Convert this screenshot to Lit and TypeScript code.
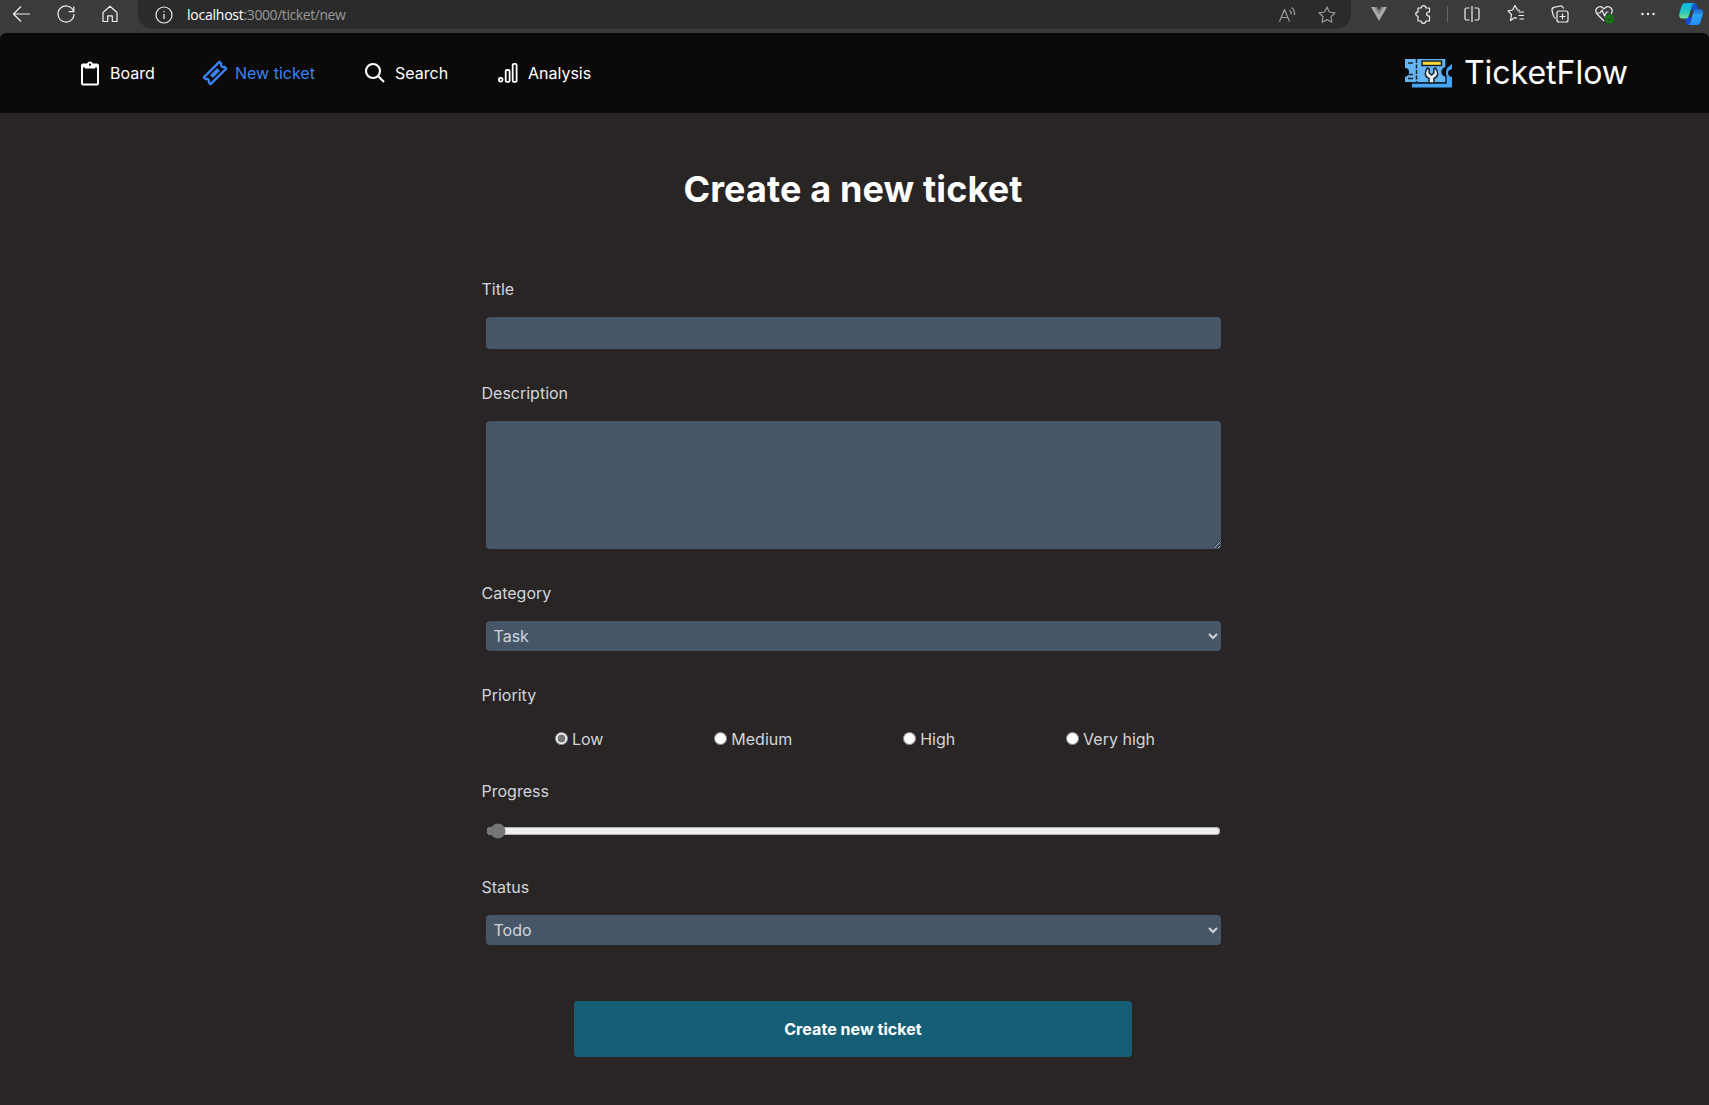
import { LitElement, html, css, svg } from "lit";
import { customElement, property } from "lit/decorators.js";

const glyphs: Record<string, unknown> = {
  back: svg`<path d="M3.500 12H20M11 4.500 3.500 12l7.500 7.500"/>`,
  reload: svg`<path d="M19.600 9.500A8 8 0 1 0 20 12M19.800 4.500V9.700H14.600"/>`,
  home: svg`<path d="M5 10.500 12 4.300l7 6.200V19.500h-4.700v-5.700h-4.600v5.700H5z"/>`,
  info: svg`<circle cx="12" cy="12" r="8"/><path d="M12 11v5M12 8v1.300"/>`,
  aloud: svg`<path d="M4.500 18.500 9.500 6.500 14.500 18.500M6.300 14.500h6.400M14.500 7q2 1.500 1.700 4.500M16.500 4.500q3.500 2.500 3 7.500"/>`,
  star: svg`<path d="m12 4 2.400 5 5.600.8-4 3.900.9 5.500-4.900-2.600-4.900 2.600.9-5.500-4-3.900 5.600-.8z"/>`,
  vue: svg`<path d="M4 5h5l3 5 3-5h5l-8 14z" fill="#aaa" stroke="none"/><path d="M7.500 5H10l2 3.500L14 5h2.500L12 12.500z" fill="#808080" stroke="none"/>`,
  puzzle: svg`<path d="M7 6h3.200a2.300 2.300 0 0 1 4.600 0H18.500v4h-.8a2 2 0 0 0 0 4h.8v5h-3.700a2.300 2.300 0 0 1-4.600 0H7v-4.700a2.200 2.200 0 0 1 0-4.400z"/>`,
  split: svg`<path d="M12 4v16M9.500 6H6.500Q5 6 5 7.500v9Q5 18 6.500 18h3M14.500 6h3Q19 6 19 7.500v9q0 1.500-1.500 1.500h-3"/>`,
  favorites: svg`<path d="M13 16.500 11 15.500 6.500 18.500l1-6L4 8.900 8.600 8 11 3.500 13.400 8l2.600.5M14.500 10h5.500M14.500 13.500h5.500M15.500 17h4.500"/>`,
  collections: svg`<rect x="9" y="9" width="11" height="11" rx="2"/><path d="M14.500 11.500v6M11.500 14.500h6M7.500 16.500Q5.500 15 5 12.500L4 8.500Q3.500 6 6 5.300L12 4Q14.500 3.500 15.500 6.500"/>`,
  health: svg`<path d="M12 19 5 12Q2.500 8.500 5 6q3.500-3 7 .8Q15.500 3 19 6q2.500 3 0 6M4 11h4l2-3 2.500 6L14.500 10h2"/><circle cx="17.500" cy="17" r="4.500" fill="#107c10" stroke="none"/><path d="m15.500 17 1.500 1.500 2.800-3" stroke="#3b3b3b"/>`,
  dots: svg`<g fill="currentColor" stroke="none"><circle cx="6.500" cy="12" r="1.200"/><circle cx="12" cy="12" r="1.200"/><circle cx="17.500" cy="12" r="1.200"/></g>`,
};

const navGlyphs: Record<string, unknown> = {
  board: svg`<path fill="currentColor" d="M19 3h-4.180C14.400 1.840 13.300 1 12 1s-2.400.840-2.820 2H5a2 2 0 0 0-2 2v18a2 2 0 0 0 2 2h14a2 2 0 0 0 2-2V5a2 2 0 0 0-2-2m-7 0a1 1 0 1 1 0 2 1 1 0 0 1 0-2M5 23V7h14v16z" transform="translate(0 -.5)"/><path fill="currentColor" d="M7 5h10v2.500H7z"/><circle cx="12" cy="3.800" r="1" fill="#0c0a09"/>`,
  ticket: svg`<g transform="rotate(-45 12 12)"><path d="M1 7.200h22v2.600a2.300 2.300 0 0 0 0 4.400v2.600H1v-2.600a2.300 2.300 0 0 0 0-4.400z" fill="none" stroke="currentColor" stroke-width="2.300" stroke-linejoin="round"/><rect x="7" y="10" width="10" height="4" rx=".5" fill="currentColor"/></g>`,
  search: svg`<path fill="none" stroke="currentColor" stroke-width="2.100" d="M21 21l-6-6M3 10a7 7 0 1 0 14 0 7 7 0 1 0-14 0"/>`,
  analysis: svg`<g fill="none" stroke="currentColor" stroke-width="1.800"><rect x="2.900" y="17" width="3.600" height="3.600" rx="1.500"/><rect x="9.700" y="9" width="3.900" height="11.900" rx="1.200"/><rect x="16.700" y="2.900" width="3.900" height="18" rx="1.200"/></g>`,
};

@customElement("tool-icon")
export class ToolIcon extends LitElement {
  @property() name = "";
  static styles = css`
    :host { display: block; width: 24px; height: 24px; }
    .icon { display: block; width: 24px; height: 24px; fill: none; stroke: currentColor; stroke-width: 1.200; stroke-linejoin: round; }
  `;
  render() {
    return html`<svg class="icon" viewBox="0 0 24 24">${glyphs[this.name]}</svg>`;
  }
}

@customElement("nav-icon")
export class NavIcon extends LitElement {
  @property() name = "";
  static styles = css`
    :host { display: block; width: 24px; height: 24px; }
    .icon { display: block; width: 24px; height: 24px; overflow: visible; }
  `;
  render() {
    return html`<svg class="icon" viewBox="0 0 24 24">${navGlyphs[this.name]}</svg>`;
  }
}

@customElement("app-root")
export class AppRoot extends LitElement {
  static styles = css`
    :host { display: flex; flex-direction: column; height: 1105px; background: #292524; color: #d1d5db; font: 16px/24px Inter, sans-serif; overflow: hidden; }
    * { box-sizing: border-box; }
    .browser { display: flex; height: 33px; background: #3b3b3b; color: #f0f0f0; padding-left: 10px; flex: none; }
    .start { display: flex; gap: 20px; padding-top: 2px; width: 128px; }
    .address { display: flex; align-items: center; width: 1213px; height: 29px; padding: 0 12px 0 14px; background: #2b2b2b; border-radius: 0 0 15px 15px; font: 14px/20px "Open Sans", sans-serif; letter-spacing: -0.430px; }
    .url { margin-left: 11px; flex: 1; color: #999; }
    .url b { font-weight: 400; color: #fff; letter-spacing: -0.230px; }
    .tools { display: flex; gap: 16px; color: #999; }
    .actions { display: flex; align-items: flex-start; padding: 2px 0 0 16px; gap: 20px; }
    .divider { width: 1px; height: 16px; margin: 4px -8px 0 -8px; background: #666; }
    .copilot { width: 26px; height: 26px; margin-left: -2px; margin-top: -1px; }
    .shell { background: #3b3b3b; flex: none; }
    .bar { display: flex; align-items: center; justify-content: space-between; height: 80px; background: #0c0a09; padding: 0 81px 0 78px; border-radius: 6px 6px 0 0; color: #fff; }
    .nav { display: flex; }
    .link { display: flex; align-items: center; gap: 8px; }
    .link.board { width: 125px; }
    .link.ticket { width: 160px; color: #3b82f6; }
    .link.search { width: 133px; }
    .brand { display: flex; align-items: center; gap: 11px; font-size: 32px; line-height: 40px; }
    .logo { display: block; width: 49px; height: 32px; }
    .page { display: flex; flex-direction: column; align-items: center; padding: 52px 3px 0 0; }
    .heading { margin: 0; color: #fff; font-size: 36px; line-height: 48px; font-weight: 700; letter-spacing: 0.130px; }
    .form { display: flex; flex-direction: column; width: 743px; padding-top: 64px; }
    .label { height: 24px; }
    .field { display: block; width: 735px; margin: 0 4px; border: 0; padding: 4px 8px; border-radius: 4px; background: #475569; color: #d1d5db; font: 16px/24px Inter, sans-serif; }
    .input { height: 32px; margin-top: 16px; margin-bottom: 32px; }
    .area { height: 128px; margin-top: 16px; margin-bottom: 32px; resize: both; }
    .select { height: 30px; margin-top: 16px; margin-bottom: 32px; padding: 3px 4px; }
    .radios { display: flex; justify-content: space-around; height: 24px; margin: 20px 4px 28px; padding: 0 10px 0 14px; }
    .choice { display: flex; align-items: center; gap: 4px; }
    .radio { width: 13px; height: 13px; margin: 0 0 2px; accent-color: #757575; }
    .range { width: 735px; height: 16px; margin: 20px 4px 36px; accent-color: #757575; }
    .submit { width: 558px; height: 56px; margin: 24px auto 0; border: 0; border-radius: 4px; background: #155e75; color: #fff; font: 700 16px/24px Inter, sans-serif; letter-spacing: 0.060px; }
  `;

  render() {
    return html`
      <div class="browser">
        <div class="start">${["back", "reload", "home"].map((n) => html`<tool-icon name=${n}></tool-icon>`)}</div>
        <div class="address">
          <tool-icon name="info"></tool-icon>
          <span class="url"><b>localhost</b>:3000/ticket/new</span>
          <div class="tools"><tool-icon name="aloud"></tool-icon><tool-icon name="star"></tool-icon></div>
        </div>
        <div class="actions">
          <tool-icon name="vue"></tool-icon><tool-icon name="puzzle"></tool-icon><span class="divider"></span>
          ${["split", "favorites", "collections", "health", "dots"].map((n) => html`<tool-icon name=${n}></tool-icon>`)}
          <svg class="copilot" viewBox="0 0 26 26">
            <defs>
              <linearGradient id="a" x2="0" y2="1"><stop stop-color="#0bb3e8"/><stop offset=".55" stop-color="#27c5c0"/><stop offset="1" stop-color="#6fe08c"/></linearGradient>
              <linearGradient id="b" x2="0" y2="1"><stop stop-color="#1b62c8"/><stop offset=".4" stop-color="#2ba5f5"/><stop offset="1" stop-color="#1e8df5"/></linearGradient>
            </defs>
            <path d="M13 2h3.500q2 0 2.700 2.500L20.500 9H13z" fill="#1456c8"/><path d="M6.500 16h7l-2 8H11Q8.500 24 7.500 20.500z" fill="#1747d4"/>
            <path d="M7 2h9.500q-2 .5-3 4L11 14.500q-.8 3-3 3H4.500q-4.500 0-3-5.500L3.500 5Q4.500 2 7 2z" fill="url(#a)"/>
            <path d="M17.500 8H22q4 0 2.800 5l-2.300 8q-.8 3-3.500 3H10q2-.5 3-4l2.500-9.500Q16 8 17.500 8z" fill="url(#b)"/>
          </svg>
        </div>
      </div>
      <div class="shell"><header class="bar">
        <nav class="nav">
          <a class="link board"><nav-icon name="board"></nav-icon>Board</a>
          <a class="link ticket"><nav-icon name="ticket"></nav-icon>New ticket</a>
          <a class="link search"><nav-icon name="search"></nav-icon>Search</a>
          <a class="link"><nav-icon name="analysis"></nav-icon>Analysis</a>
        </nav>
        <div class="brand">
          <svg class="logo" viewBox="0 0 49 32">
            <path d="M8 25.500h34V15l1-4 5-4v5q-4 1-4 4t4 4v10.500H8z" fill="#42a5f5"/>
            <path d="M1 2h41v8.500q-4 1-4 4.500t4 4V25H1v-5q4-1 4-5t-4-4z" fill="#64b5f6"/>
            <path d="M42 2v8.500q-4 1-4 4.500t4 4V26H8" fill="none" stroke="#0e1a24" stroke-width="1.500"/>
            <path d="M12.500 2v24" stroke="#17242e" stroke-width="1.500" stroke-dasharray="4 1.500"/>
            <path d="M4 6h5M4 17.500h5M4 21.500h5" stroke="#17242e" stroke-width="1.500"/>
            <rect x="18" y="4" width="19.500" height="4.500" fill="#fdd835" stroke="#17242e" stroke-width="1.500"/>
            <path d="M23.500 11q-5 7.500 1.500 10.500V26h5v-4.500q6.500-3 1.500-10.500l-1.700 1v4l-2.300 2-2.300-2v-4z" fill="#eceff1" stroke="#17242e" stroke-width="1.500"/>
          </svg>
          TicketFlow
        </div>
      </header></div>
      <main class="page">
        <h1 class="heading">Create a new ticket</h1>
        <form class="form">
          <label class="label">Title</label>
          <input class="field input" />
          <label class="label">Description</label>
          <textarea class="field area"></textarea>
          <label class="label">Category</label>
          <select class="field select"><option>Task</option></select>
          <label class="label">Priority</label>
          <div class="radios">
            ${["Low", "Medium", "High", "Very high"].map((t, i) => html`<label class="choice"><input class="radio" type="radio" name="priority" .checked=${i === 0} />${t}</label>`)}
          </div>
          <label class="label">Progress</label>
          <input class="range" type="range" min="0" max="100" step="any" value="0.600" />
          <label class="label">Status</label>
          <select class="field select"><option>Todo</option></select>
          <button class="submit" type="button">Create new ticket</button>
        </form>
      </main>
    `;
  }
}
